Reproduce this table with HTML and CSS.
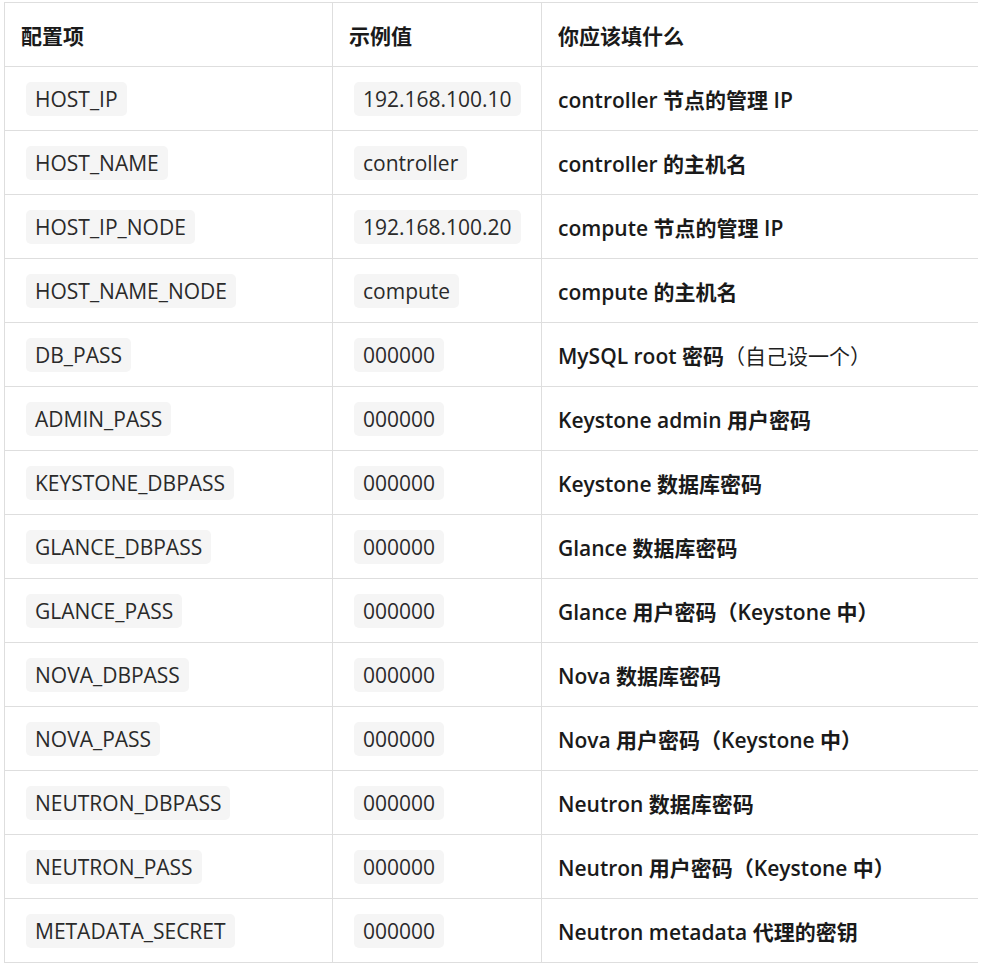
FILE: index.html
```html
<!DOCTYPE html>
<html lang="zh-CN">
<head>
<meta charset="utf-8">
<title>配置项</title>
<link rel="stylesheet" href="styles.css">
</head>
<body>
<table class="cfg">
  <colgroup>
    <col class="c1"><col class="c2"><col class="c3">
  </colgroup>
  <thead>
    <tr><th>配置项</th><th>示例值</th><th>你应该填什么</th></tr>
  </thead>
  <tbody>
    <tr><td><code>HOST_IP</code></td><td><code>192.168.100.10</code></td><td><strong>controller 节点的管理 IP</strong></td></tr>
    <tr><td><code>HOST_NAME</code></td><td><code>controller</code></td><td><strong>controller 的主机名</strong></td></tr>
    <tr><td><code>HOST_IP_NODE</code></td><td><code>192.168.100.20</code></td><td><strong>compute 节点的管理 IP</strong></td></tr>
    <tr><td><code>HOST_NAME_NODE</code></td><td><code>compute</code></td><td><strong>compute 的主机名</strong></td></tr>
    <tr><td><code>DB_PASS</code></td><td><code>000000</code></td><td><strong>MySQL root 密码</strong>（自己设一个）</td></tr>
    <tr><td><code>ADMIN_PASS</code></td><td><code>000000</code></td><td><strong>Keystone admin 用户密码</strong></td></tr>
    <tr><td><code>KEYSTONE_DBPASS</code></td><td><code>000000</code></td><td><strong>Keystone 数据库密码</strong></td></tr>
    <tr><td><code>GLANCE_DBPASS</code></td><td><code>000000</code></td><td><strong>Glance 数据库密码</strong></td></tr>
    <tr><td><code>GLANCE_PASS</code></td><td><code>000000</code></td><td><strong>Glance 用户密码（Keystone 中）</strong></td></tr>
    <tr><td><code>NOVA_DBPASS</code></td><td><code>000000</code></td><td><strong>Nova 数据库密码</strong></td></tr>
    <tr><td><code>NOVA_PASS</code></td><td><code>000000</code></td><td><strong>Nova 用户密码（Keystone 中）</strong></td></tr>
    <tr><td><code>NEUTRON_DBPASS</code></td><td><code>000000</code></td><td><strong>Neutron 数据库密码</strong></td></tr>
    <tr><td><code>NEUTRON_PASS</code></td><td><code>000000</code></td><td><strong>Neutron 用户密码（Keystone 中）</strong></td></tr>
    <tr><td><code>METADATA_SECRET</code></td><td><code>000000</code></td><td><strong>Neutron metadata 代理的密钥</strong></td></tr>
  </tbody>
</table>
</body>
</html>
```
FILE: styles.css
```css
html, body {
  background: #ffffff;
}
body {
  margin: 2px 4px 0 4px;
  font-family: "Open Sans", "Noto Sans CJK SC", sans-serif;
  font-size: 21px;
  color: #1f1f1f;
}
.cfg {
  border-collapse: collapse;
  width: 974px;
  table-layout: fixed;
}
.c1 { width: 328px; }
.c2 { width: 209px; }
.c3 { width: 437px; }
.cfg th,
.cfg td {
  border: 1px solid #dedede;
  height: 63px;
  padding: 0 16px;
  text-align: left;
  vertical-align: middle;
  white-space: nowrap;
}
.cfg th {
  font-weight: 700;
  color: #1a1a1a;
}
.cfg code {
  font-family: "Open Sans", "Noto Sans CJK SC", sans-serif;
  font-size: 21px;
  line-height: 28px;
  display: inline-block;
  padding: 3px 9px;
  margin-left: 5px;
  background: #f5f5f5;
  border-radius: 5px;
  color: #2a2a2a;
}
.cfg strong {
  font-weight: 600;
  color: #1a1a1a;
}
```
